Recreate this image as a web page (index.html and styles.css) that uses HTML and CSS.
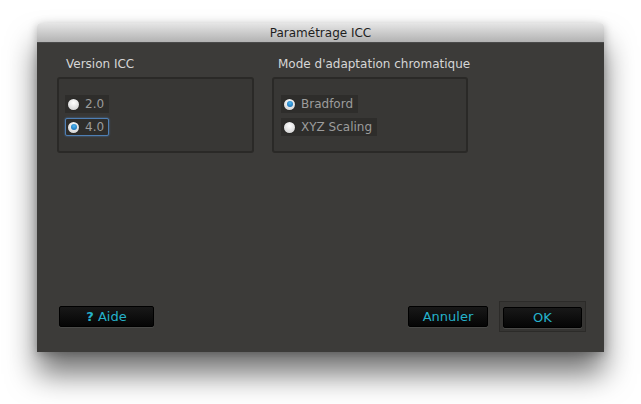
FILE: index.html
```html
<!DOCTYPE html>
<html lang="fr">
<head>
  <meta charset="UTF-8">
  <title>Paramétrage ICC</title>
  <link rel="stylesheet" href="styles.css">
</head>
<body>

  <div class="window">
    <div class="titlebar">Paramétrage ICC</div>
    <div class="content">
      <div class="groups">
        <div class="group group-version">
          <div class="group-title">Version ICC</div>
          <div class="group-box">
            <div class="option"><span class="radio"></span>2.0</div>
            <div class="option focused"><span class="radio checked"></span>4.0</div>
          </div>
        </div>
        <div class="group group-mode">
          <div class="group-title">Mode d'adaptation chromatique</div>
          <div class="group-box">
            <div class="option"><span class="radio checked"></span>Bradford</div>
            <div class="option"><span class="radio"></span>XYZ Scaling</div>
          </div>
        </div>
      </div>

      <div class="buttons">
        <button class="btn btn-help"><b>?</b> Aide</button>
        <div class="right-buttons">
          <button class="btn btn-cancel">Annuler</button>
          <div class="default-frame">
            <button class="btn btn-ok">OK</button>
          </div>
        </div>
      </div>
    </div>
  </div>

</body>
</html>
```

FILE: styles.css
```css
html {
  background: #fff;
}

body {
  margin: 0;
  height: 404px;
  padding-top: 23px;
  box-sizing: border-box;
  font-family: 'DejaVu Sans', 'Noto Sans', sans-serif;
}

.window {
  margin-left: 37px;
  width: 567px;
  box-shadow: 0 22px 30px rgba(0, 0, 0, 0.55), 0 2px 10px rgba(0, 0, 0, 0.25);
  border-radius: 4px 4px 0 0;
}

.titlebar {
  height: 19px;
  line-height: 20px;
  text-align: center;
  font-size: 12px;
  color: #1e1e1e;
  background: linear-gradient(#e6e6e6, #b2b2b2);
  border-bottom: 1px solid #4a4a4a;
  border-radius: 4px 4px 0 0;
}

.content {
  height: 309px;
  box-sizing: border-box;
  background: #3c3b39;
  padding: 13px 18px 20px 20px;
  display: flex;
  flex-direction: column;
}

.groups {
  display: flex;
  gap: 18px;
}

.group-version {
  width: 197px;
}

.group-mode {
  width: 196px;
}

.group-title {
  font-size: 12px;
  line-height: 16px;
  color: #d6d6d6;
  margin: 0 0 5px 9px;
  white-space: nowrap;
}

.group-mode .group-title {
  margin-left: 6px;
}

.group-box {
  height: 76px;
  box-sizing: border-box;
  border: 2px solid #2a2927;
  border-radius: 3px;
  background: #383735;
  padding: 16px 0 0 6px;
  display: flex;
  flex-direction: column;
  align-items: flex-start;
  gap: 5px;
}

.group-mode .group-box {
  padding-left: 7px;
}

.option {
  height: 18px;
  box-sizing: border-box;
  display: flex;
  align-items: center;
  gap: 6px;
  padding: 0 4px 0 2px;
  background: #2e2d2b;
  font-size: 12px;
  color: #9c9c9c;
  border: 1px solid transparent;
}

.option.focused {
  border: 1px solid #4f7fb4;
  border-radius: 2px;
  box-shadow: 0 0 2px #4f7fb4;
}

.radio {
  width: 11px;
  height: 11px;
  border-radius: 50%;
  background: radial-gradient(circle at 50% 35%, #ffffff, #c9c9c9);
  box-shadow: 0 0 1px #000;
  display: flex;
  align-items: center;
  justify-content: center;
}

.radio.checked::after {
  content: "";
  width: 6px;
  height: 6px;
  border-radius: 50%;
  background: radial-gradient(circle at 50% 35%, #4fb6f0, #0a5fa8);
}

.buttons {
  margin-top: auto;
  display: flex;
  justify-content: space-between;
  align-items: center;
}

.right-buttons {
  display: flex;
  align-items: center;
  gap: 11px;
}

.btn {
  height: 21px;
  border: 1px solid #000;
  border-radius: 2px;
  background: linear-gradient(#181818, #050505);
  color: #25b2cb;
  font-family: 'DejaVu Sans', sans-serif;
  font-size: 13px;
  padding: 0;
  box-shadow: 0 1px 0 #4a4a48;
}

.btn-help {
  width: 95px;
  margin-left: 2px;
}

.btn-cancel {
  width: 80px;
}

.btn-ok {
  width: 79px;
}

.default-frame {
  padding: 5px 3px 3px;
  background: #363533;
  border: 1px solid #2c2b29;
}
```
